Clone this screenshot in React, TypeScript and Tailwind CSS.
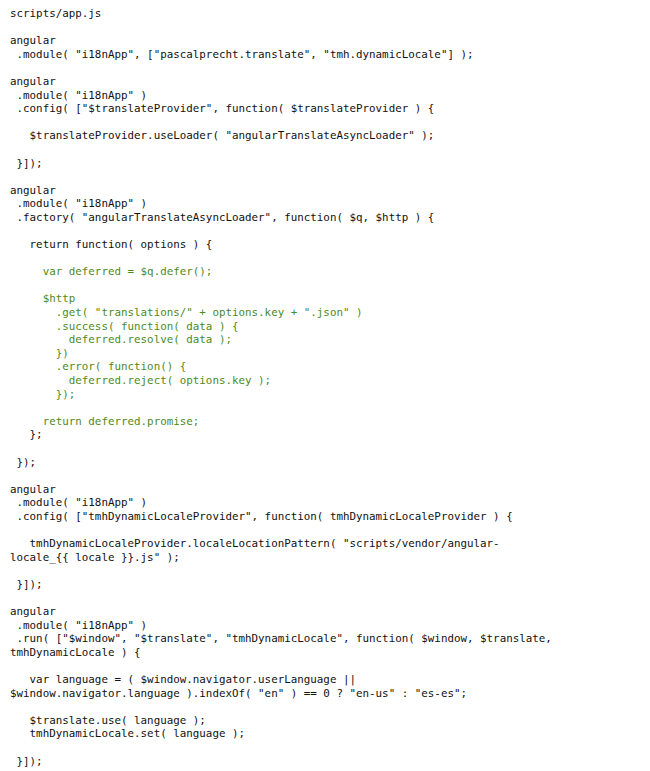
const lines: { text: string; green?: boolean }[] = [
  { text: "scripts/app.js" },
  { text: "" },
  { text: "angular" },
  { text: ' .module( "i18nApp", ["pascalprecht.translate", "tmh.dynamicLocale"] );' },
  { text: "" },
  { text: "angular" },
  { text: ' .module( "i18nApp" )' },
  { text: ' .config( ["$translateProvider", function( $translateProvider ) {' },
  { text: "" },
  { text: '   $translateProvider.useLoader( "angularTranslateAsyncLoader" );' },
  { text: "" },
  { text: " }]);" },
  { text: "" },
  { text: "angular" },
  { text: ' .module( "i18nApp" )' },
  { text: ' .factory( "angularTranslateAsyncLoader", function( $q, $http ) {' },
  { text: "" },
  { text: "   return function( options ) {" },
  { text: "" },
  { text: "     var deferred = $q.defer();", green: true },
  { text: "", green: true },
  { text: "     $http", green: true },
  { text: '       .get( "translations/" + options.key + ".json" )', green: true },
  { text: "       .success( function( data ) {", green: true },
  { text: "         deferred.resolve( data );", green: true },
  { text: "       })", green: true },
  { text: "       .error( function() {", green: true },
  { text: "         deferred.reject( options.key );", green: true },
  { text: "       });", green: true },
  { text: "", green: true },
  { text: "     return deferred.promise;", green: true },
  { text: "   };" },
  { text: "" },
  { text: " });" },
  { text: "" },
  { text: "angular" },
  { text: ' .module( "i18nApp" )' },
  { text: ' .config( ["tmhDynamicLocaleProvider", function( tmhDynamicLocaleProvider ) {' },
  { text: "" },
  { text: '   tmhDynamicLocaleProvider.localeLocationPattern( "scripts/vendor/angular-' },
  { text: 'locale_{{ locale }}.js" );' },
  { text: "" },
  { text: " }]);" },
  { text: "" },
  { text: "angular" },
  { text: ' .module( "i18nApp" )' },
  { text: ' .run( ["$window", "$translate", "tmhDynamicLocale", function( $window, $translate,' },
  { text: "tmhDynamicLocale ) {" },
  { text: "" },
  { text: "   var language = ( $window.navigator.userLanguage ||" },
  { text: '$window.navigator.language ).indexOf( "en" ) == 0 ? "en-us" : "es-es";' },
  { text: "" },
  { text: "   $translate.use( language );" },
  { text: "   tmhDynamicLocale.set( language );" },
  { text: "" },
  { text: " }]);" },
];

export default function App() {
  return (
    <div className="w-[650px] h-[771px] bg-white overflow-hidden">
      <pre className="pt-[7px] pl-[10px] font-['DejaVu_Sans_Mono',monospace] text-[10.85px] leading-[13.6px] text-[#111]">
        {lines.map((line, i) => (
          <div key={i} className={line.green ? "text-[#4e8a1c] h-[13.6px]" : "h-[13.6px]"}>
            {line.text}
          </div>
        ))}
      </pre>
    </div>
  );
}
